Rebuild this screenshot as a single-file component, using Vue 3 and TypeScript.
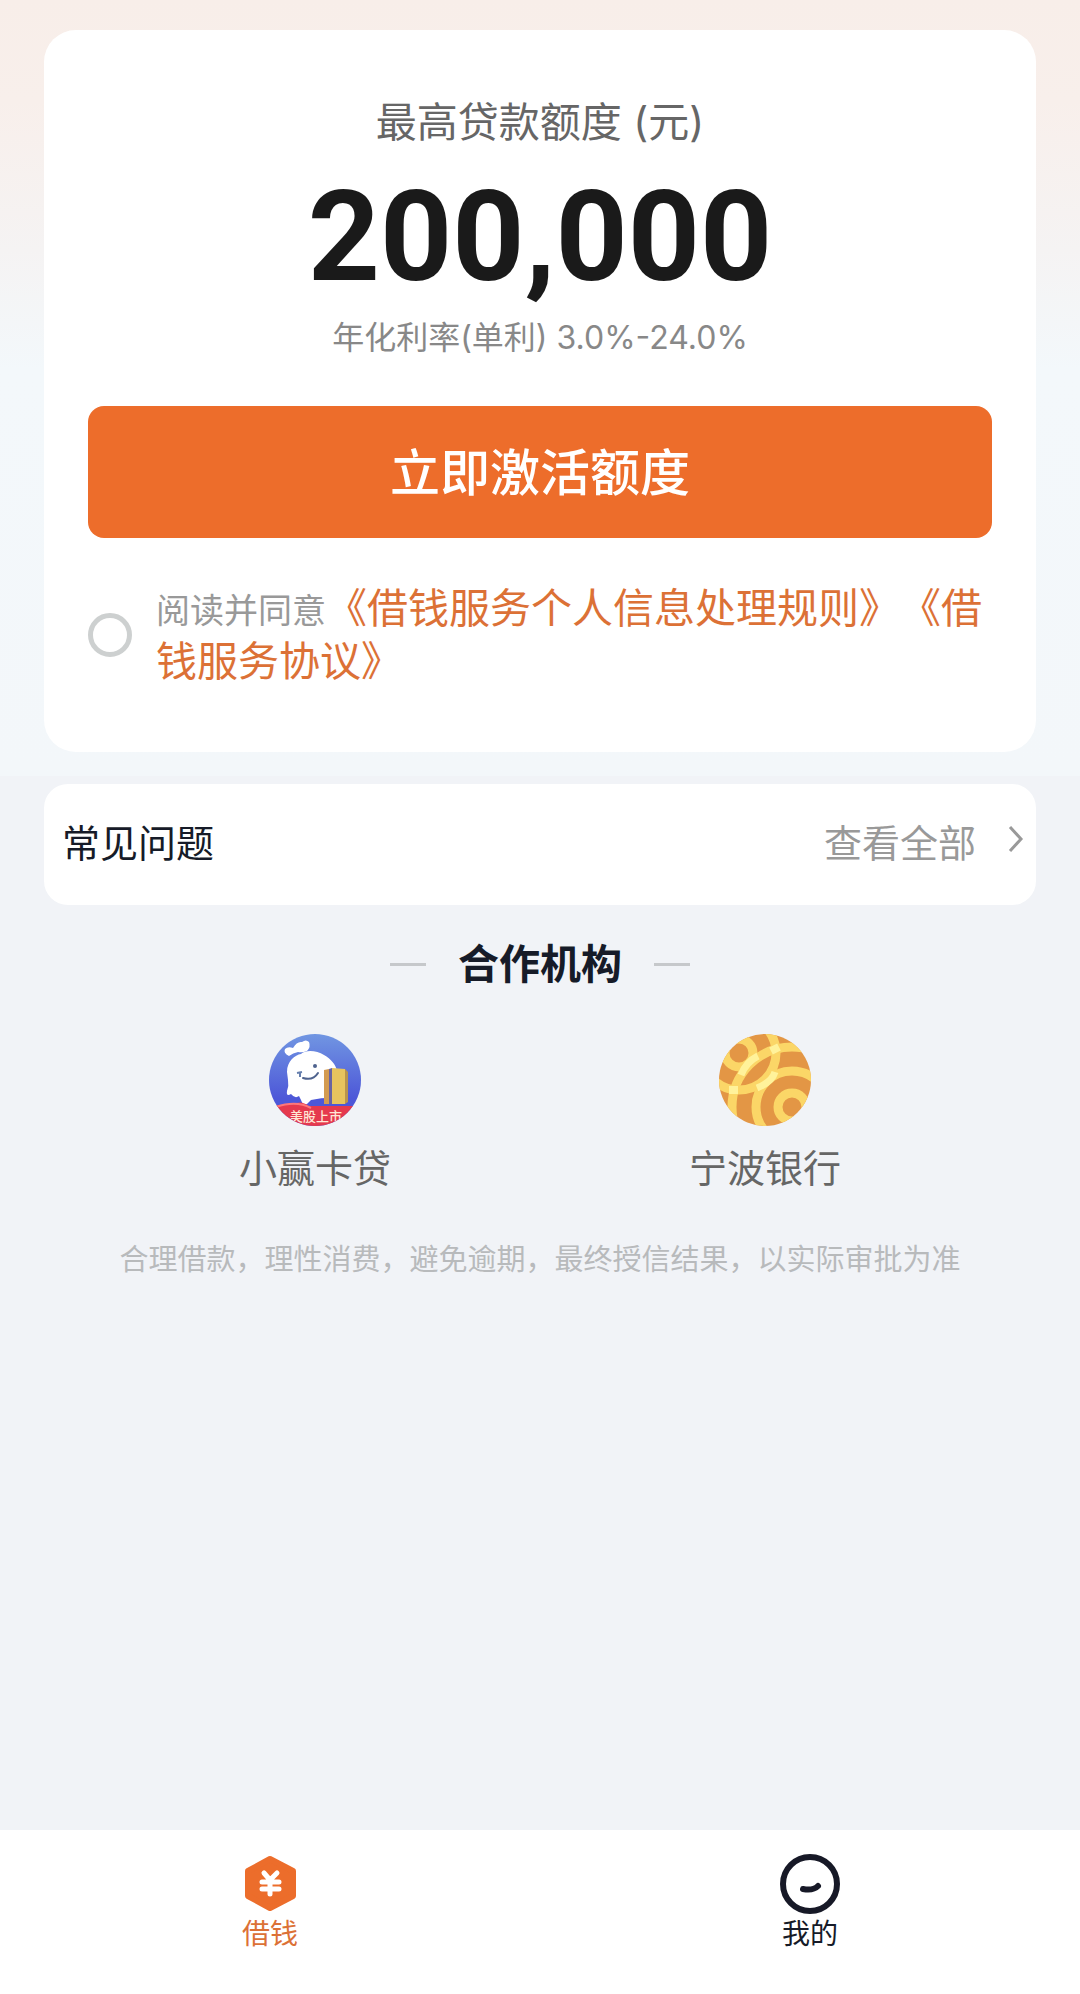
<script setup lang="ts">
import { ref } from 'vue'

const agreed = ref(false)
const notice = '合理借款，理性消费，避免逾期，最终授信结果，以实际审批为准'
</script>

<template>
  <div class="page">
    <section class="hero">
      <div class="card quota">
        <h1 class="quota-title">最高贷款额度 (元)</h1>
        <p class="amount">200,000</p>
        <p class="rate">年化利率(单利) 3.0%-24.0%</p>
        <button class="activate" type="button">立即激活额度</button>
        <div class="agreement">
          <input id="agree" v-model="agreed" class="agree-box" type="checkbox" />
          <p class="agree-text"><label for="agree">阅读并同意</label><a href="#rules">《借钱服务个人信息处理规则》</a><a href="#service">《借钱服务协议》</a></p>
        </div>
      </div>
    </section>

    <main class="content">
      <section class="card faq">
        <h2 class="faq-title">常见问题</h2>
        <a class="faq-link" href="#faq">
          查看全部
          <svg class="chevron" viewBox="0 0 16 36" aria-hidden="true">
            <path d="M2 2 L13 14 L2 26" fill="none" stroke="#999" stroke-width="3" />
          </svg>
        </a>
      </section>

      <h2 class="partner-title">合作机构</h2>
      <ul class="partners">
        <li class="partner">
          <svg class="logo" viewBox="0 0 92 92" aria-hidden="true">
            <defs>
              <linearGradient id="sky" x1="0" y1="0" x2="0" y2="1">
                <stop offset="0" stop-color="#7196e2" />
                <stop offset="0.7" stop-color="#4d57d8" />
              </linearGradient>
              <clipPath id="disc"><circle cx="46" cy="46" r="46" /></clipPath>
            </defs>
            <g clip-path="url(#disc)">
              <rect width="92" height="92" fill="url(#sky)" />
              <path d="M20 22 Q14 19 16 15 Q19 12 24 14 Q28 7 33 8 Q37 5 40 8 Q42 13 38 17 Q33 19 29 18 Q24 19 20 22 Z" fill="#fff" />
              <path d="M18 38 C18 27 26 21 32 20 C38 15 48 17 55 21 C62 25 67 31 68 37 V64 Q56 63 42 66 L38 70 Q34 72 32 66 L30 62 Q26 65 22 60 Q17 63 18 57 Q20 52 19 46 Z" fill="#fff" />
              <path d="M28 39 L33 38 M31 38 V43" fill="none" stroke="#667fae" stroke-width="2" />
              <circle cx="46" cy="32" r="2" fill="#4f638e" />
              <path d="M34 44 Q44 47 49 39" fill="none" stroke="#4f638e" stroke-width="2" stroke-linecap="round" />
              <path d="M55 36 L60 35 V70 H55 Z" fill="#d39b50" />
              <path d="M60 35 L63 34 V70 H60 Z" fill="#6964a1" />
              <path d="M63 34 L76 35 V70 H63 Z" fill="#e7c45e" />
              <path d="M76 35 L79 38 V68 L76 70 Z" fill="#b8944d" />
              <path d="M0 71 Q15 72 25 70 Q32 66 40 72 H92 V92 H0 Z" fill="#e5394e" />
              <path d="M7 73 Q27 66 42 74" fill="none" stroke="#ff7778" stroke-width="2" />
              <text x="47" y="87" text-anchor="middle" class="logo-text">美股上市</text>
            </g>
          </svg>
          <span class="partner-name">小赢卡贷</span>
        </li>
        <li class="partner">
          <svg class="logo" viewBox="0 0 92 92" aria-hidden="true">
            <defs>
              <clipPath id="coin"><circle cx="46" cy="46" r="46" /></clipPath>
            </defs>
            <g clip-path="url(#coin)">
              <rect width="92" height="92" fill="#e39645" />
              <g fill="none" stroke="#fbd667" stroke-width="9">
                <circle cx="20" cy="19" r="14" />
                <circle cx="20" cy="19" r="37" />
                <circle cx="73" cy="73" r="14" />
                <circle cx="73" cy="73" r="36" />
                <circle cx="73" cy="73" r="60" />
              </g>
              <path d="M22 41 Q27 28 39 22 M38 54 Q53 48 56 38" fill="none" stroke="#fff29b" stroke-width="7" />
              <path d="M10 56 H19 M52 17 L60 13" stroke="#fff29b" stroke-width="8" />
            </g>
          </svg>
          <span class="partner-name">宁波银行</span>
        </li>
      </ul>
      <p class="notice">{{ notice }}</p>
    </main>

    <nav class="tabs">
      <a class="tab active" href="#borrow">
        <svg class="tab-icon" viewBox="0 0 60 60" aria-hidden="true">
          <path d="M30 5 L53 17 V42 L30 54 L8 42 V17 Z" fill="#ec6d2b" stroke="#ec6d2b" stroke-width="6" stroke-linejoin="round" />
          <path d="M24 19 L30 26 L37 19 M22 28 H39 M22 35 H39 M30 27 V40" fill="none" stroke="#fff" stroke-width="5" stroke-linecap="round" />
        </svg>
        借钱
      </a>
      <a class="tab" href="#mine">
        <svg class="tab-icon" viewBox="0 0 60 60" aria-hidden="true">
          <circle cx="30" cy="30" r="27" fill="#fff" stroke="#171927" stroke-width="6" />
          <path d="M23 35 Q33 37 38 32" fill="none" stroke="#171927" stroke-width="6" stroke-linecap="round" />
        </svg>
        我的
      </a>
    </nav>
  </div>
</template>

<style>
body {
  margin: 0;
}
</style>

<style scoped>
.page {
  display: flex;
  flex-direction: column;
  min-height: 100vh;
  background: #f1f3f7;
  color: #161b28;
  font-family: Inter, "Noto Sans CJK SC", sans-serif;
  text-spacing-trim: space-all;
}

h1,
h2,
p,
ul {
  margin: 0;
  padding: 0;
  font-weight: 400;
}

a {
  text-decoration: none;
}

.hero {
  padding: 30px 44px 24px;
  background: linear-gradient(#f8eee9 0, #f8efeb 100px, #f5f3f3 250px, #f3f8fb 370px, #f3f7fa);
}

.card {
  background: #fff;
}

.quota {
  padding: 64px 44px;
  border-radius: 32px;
  text-align: center;
}

.quota-title {
  color: #666;
  font-size: 41px;
  line-height: 56px;
}

.amount {
  margin-top: 20px;
  color: #1a1a1a;
  font-family: Roboto, sans-serif;
  font-size: 126px;
  font-weight: 700;
  line-height: 134px;
}

.rate {
  margin-top: 12px;
  color: #888;
  font-size: 32px;
  line-height: 44px;
}

.activate {
  display: block;
  width: 100%;
  height: 132px;
  margin-top: 46px;
  padding: 0 0 6px;
  border: 0;
  border-radius: 16px;
  background: #ed6d2b;
  color: #fff;
  font-family: inherit;
  font-size: 50px;
  font-weight: 500;
}

.agreement {
  display: flex;
  align-items: center;
  gap: 24px;
  margin-top: 44px;
  text-align: left;
}

.agree-box {
  flex: none;
  width: 44px;
  height: 44px;
  margin: 0;
  border: 5px solid #cdd0d0;
  border-radius: 50%;
  background: #fff;
  appearance: none;
}

.agree-box:checked {
  border-color: #ed6d2b;
  background: #ed6d2b;
}

.agree-text {
  flex: 1;
  font-size: 41px;
  line-height: 53px;
}

.agree-text label {
  color: #999;
  font-size: 34px;
  line-height: 34px;
}

.agree-text a {
  color: #dc7136;
}

.content {
  flex: 1;
  padding: 8px 44px 40px;
}

.faq {
  display: flex;
  align-items: center;
  justify-content: space-between;
  padding: 35px 12px 38px 18px;
  border-radius: 24px;
  font-size: 38px;
  line-height: 48px;
}

.faq-title {
  font-size: 38px;
}

.faq-link {
  display: flex;
  align-items: center;
  gap: 32px;
  color: #999;
}

.chevron {
  width: 16px;
  height: 36px;
}

.partner-title {
  display: flex;
  align-items: center;
  justify-content: center;
  gap: 32px;
  margin-top: 31px;
  font-size: 41px;
  font-weight: 700;
  line-height: 56px;
}

.partner-title::before,
.partner-title::after {
  width: 36px;
  height: 3px;
  background: #c6c8cb;
  content: "";
}

.partners {
  display: flex;
  margin-top: 42px;
  padding: 0 46px;
  list-style: none;
}

.partner {
  display: flex;
  flex: 1;
  flex-direction: column;
  align-items: center;
  gap: 18px;
}

.logo {
  width: 92px;
  height: 92px;
}

.logo-text {
  fill: #ffe6d6;
  font-size: 13px;
  font-weight: 500;
}

.partner-name {
  color: #666;
  font-size: 38px;
  line-height: 48px;
}

.notice {
  margin-top: 48px;
  color: #b8babc;
  font-size: 29px;
  line-height: 40px;
  text-align: center;
}

.tabs {
  display: flex;
  padding: 24px 0 40px;
  background: #fff;
}

.tab {
  display: flex;
  flex: 1;
  flex-direction: column;
  align-items: center;
  color: #161b28;
  font-size: 28px;
  line-height: 40px;
}

.tab.active {
  color: #dc7136;
}

.tab-icon {
  width: 60px;
  height: 60px;
}
</style>
